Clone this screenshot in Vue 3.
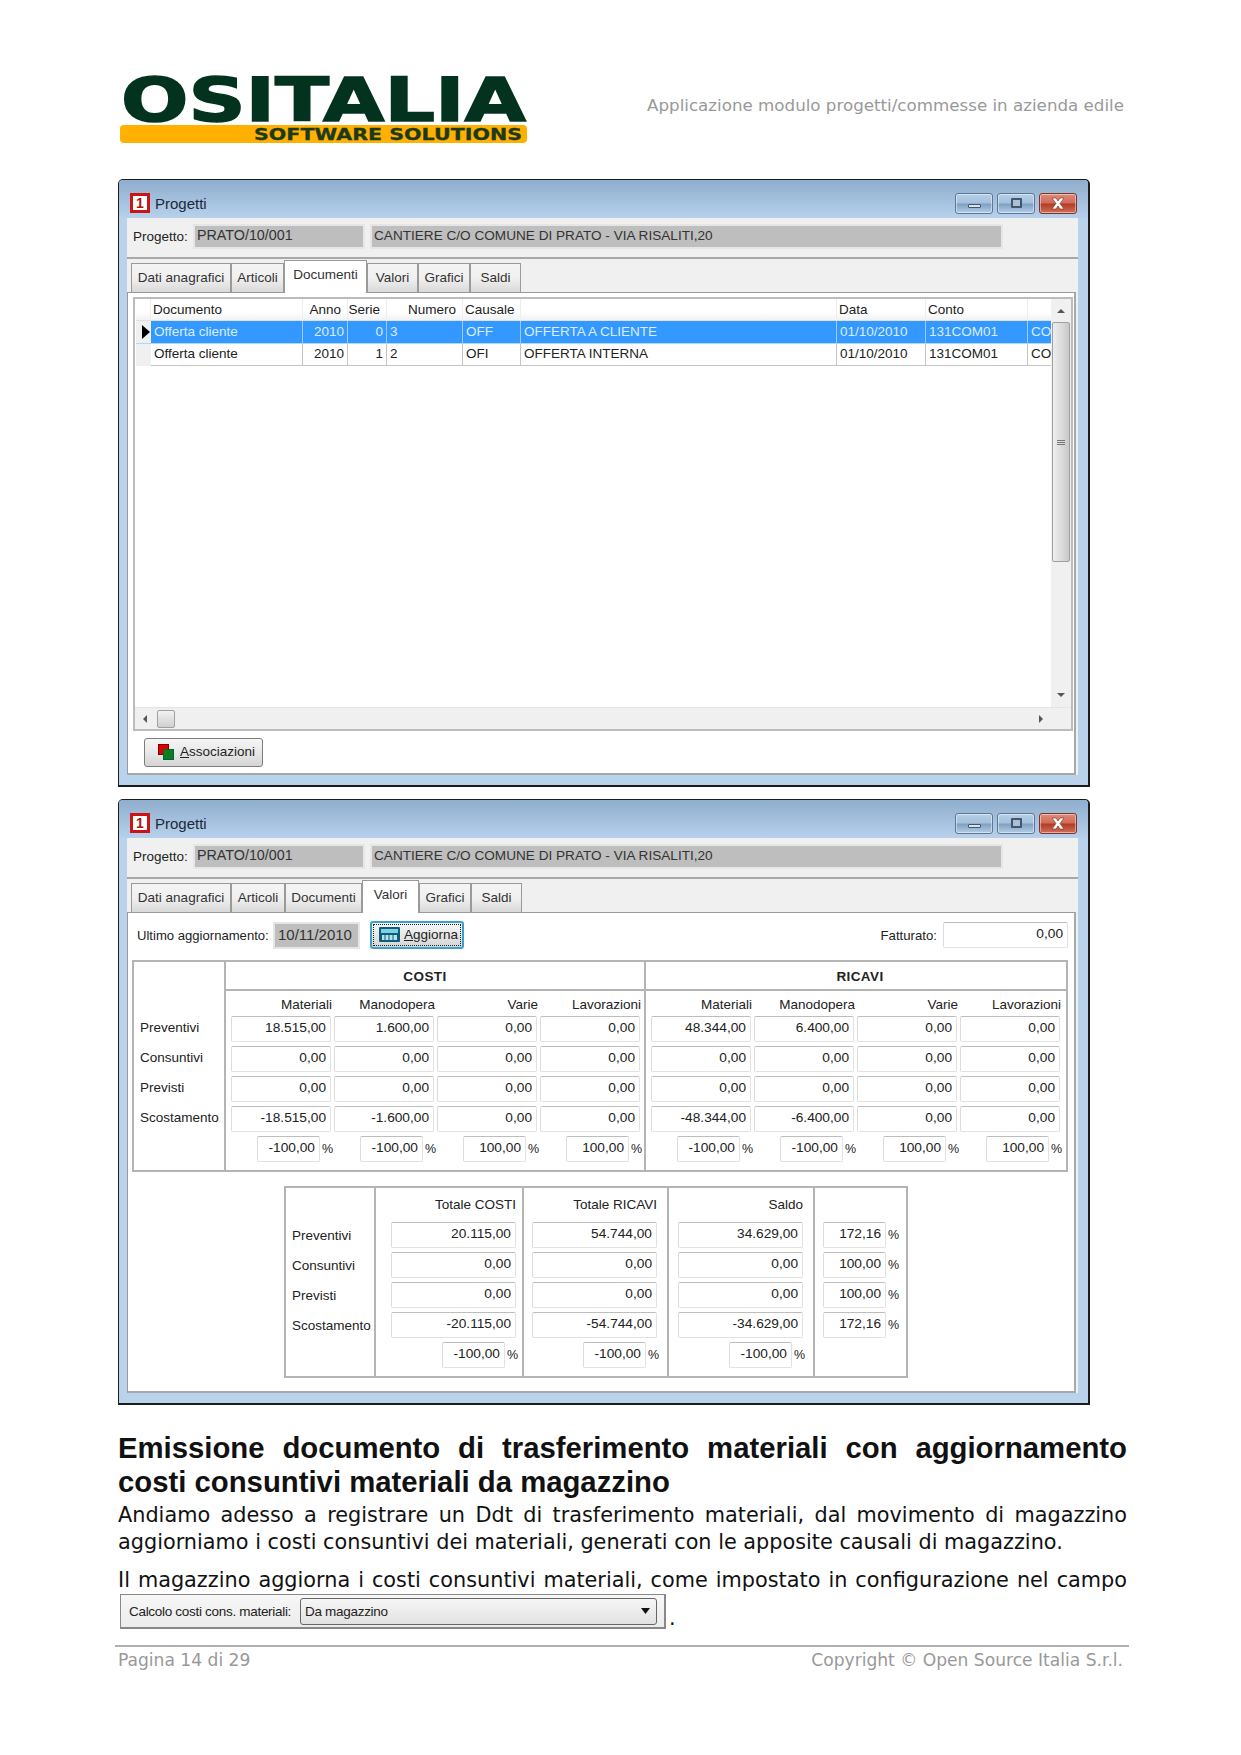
<script setup>
const tabs = ['Dati anagrafici', 'Articoli', 'Documenti', 'Valori', 'Grafici', 'Saldi']
const tabWidths1 = [100, 53, 83, 51, 52, 51]
const tabWidths2 = [100, 54, 77, 57, 52, 51]
const gridHead = ['', 'Documento', 'Anno', 'Serie', 'Numero', 'Causale', '', 'Data', 'Conto', '']
const headAlign = ['', '', 'r', 'r', 'r', '', '', '', '', '']
const cellAlign = ['', '', 'r', 'r', 'l', '', '', '', '', '']
const gridRows = [
  { sel: true, cells: ['', 'Offerta cliente', '2010', '0', '3', 'OFF', 'OFFERTA A CLIENTE', '01/10/2010', '131COM01', 'CO'] },
  { sel: false, cells: ['', 'Offerta cliente', '2010', '1', '2', 'OFI', 'OFFERTA INTERNA', '01/10/2010', '131COM01', 'CO'] }
]
const rowLabels = ['Preventivi', 'Consuntivi', 'Previsti', 'Scostamento']
const colHead = ['Materiali', 'Manodopera', 'Varie', 'Lavorazioni']
const groups = [
  { title: 'COSTI', rows: [['18.515,00', '1.600,00', '0,00', '0,00'], ['0,00', '0,00', '0,00', '0,00'], ['0,00', '0,00', '0,00', '0,00'], ['-18.515,00', '-1.600,00', '0,00', '0,00']], pct: ['-100,00', '-100,00', '100,00', '100,00'] },
  { title: 'RICAVI', rows: [['48.344,00', '6.400,00', '0,00', '0,00'], ['0,00', '0,00', '0,00', '0,00'], ['0,00', '0,00', '0,00', '0,00'], ['-48.344,00', '-6.400,00', '0,00', '0,00']], pct: ['-100,00', '-100,00', '100,00', '100,00'] }
]
const totals = [
  { head: 'Totale COSTI', cls: 'c1', vals: ['20.115,00', '0,00', '0,00', '-20.115,00'], pct: '-100,00' },
  { head: 'Totale RICAVI', cls: 'c2', vals: ['54.744,00', '0,00', '0,00', '-54.744,00'], pct: '-100,00' },
  { head: 'Saldo', cls: 'c3', vals: ['34.629,00', '0,00', '0,00', '-34.629,00'], pct: '-100,00' }
]
const lastPct = ['172,16', '100,00', '100,00', '172,16']
const windows = [
  { active: 2, widths: tabWidths1, cls: 'w1' },
  { active: 3, widths: tabWidths2, cls: 'w2' }
]
</script>

<template>
  <div class="page">
    <header class="top">
      <svg class="logo" width="408" height="72" viewBox="0 0 408 72">
        <text x="1" y="46" class="logo-main" textLength="405" lengthAdjust="spacingAndGlyphs">OSITALIA</text>
        <rect x="0" y="50" width="407" height="18" rx="4" fill="#ffb000" />
        <text x="134" y="64.500" class="logo-sub" textLength="268" lengthAdjust="spacingAndGlyphs">SOFTWARE SOLUTIONS</text>
      </svg>
      <div class="doc-title">Applicazione modulo progetti/commesse in azienda edile</div>
    </header>

    <section v-for="(w, wi) in windows" :key="wi" class="win" :class="w.cls">
      <div class="titlebar">
        <span class="app-icon"><span>1</span></span>
        <span class="win-title">Progetti</span>
        <div class="controls">
          <span class="ctl"><i class="min"></i></span>
          <span class="ctl"><i class="max"></i></span>
          <span class="ctl close">
            <svg width="18" height="13" viewBox="0 0 18 13"><path d="M3 1h4l2 3 2-3h4l-4 5.500 4 5.500h-4l-2-3-2 3H3l4-5.500z" fill="#fff" stroke="#7a2a20" stroke-width=".6" /></svg>
          </span>
        </div>
      </div>

      <div class="client">
        <div class="proj-row">
          <span class="lbl proj-lbl">Progetto:</span>
          <span class="ro f1">PRATO/10/001</span>
          <span class="ro f2">CANTIERE C/O COMUNE DI PRATO - VIA RISALITI,20</span>
        </div>
        <div class="tabs">
          <span v-for="(t, i) in tabs" :key="t" class="tab" :class="{ on: i === w.active }" :style="{ width: w.widths[i] + 'px' }">{{ t }}</span>
        </div>

        <div v-if="wi === 0" class="panel">
          <div class="gridbox">
            <div class="grid-main">
              <div class="grid-table">
                <div class="g-row head">
                  <span v-for="(h, i) in gridHead" :key="i" class="g-cell" :class="'a-' + headAlign[i]">{{ h }}</span>
                </div>
                <div v-for="(r, ri) in gridRows" :key="ri" class="g-row" :class="{ sel: r.sel }">
                  <span v-for="(c, i) in r.cells" :key="i" class="g-cell" :class="['a-' + cellAlign[i], { ind: i === 0 }]">
                    <svg v-if="i === 0 && r.sel" width="9" height="14" viewBox="0 0 9 14"><path d="M1 0l8 7-8 7z" fill="#000" /></svg>
                    <template v-else>{{ c }}</template>
                  </span>
                </div>
              </div>
              <div class="vscroll">
                <svg class="arrow" width="10" height="6" viewBox="0 0 10 6"><path d="M5 1l4 4H1z" fill="#555" /></svg>
                <div class="vthumb"><i></i><i></i><i></i></div>
                <svg class="arrow down" width="10" height="6" viewBox="0 0 10 6"><path d="M1 1h8L5 5z" fill="#555" /></svg>
              </div>
            </div>
            <div class="hscroll">
              <svg width="6" height="10" viewBox="0 0 6 10"><path d="M5 1v8L1 5z" fill="#555" /></svg>
              <div class="hthumb"></div>
              <svg class="hright" width="6" height="10" viewBox="0 0 6 10"><path d="M1 1v8l4-4z" fill="#555" /></svg>
            </div>
          </div>
          <button class="btn assoc">
            <svg width="16" height="16" viewBox="0 0 16 16"><rect x="0.500" y="0.500" width="10" height="10" fill="#e00000" stroke="#700" /><rect x="5.500" y="5.500" width="10" height="10" fill="#0d7d20" stroke="#063" /></svg>
            <span><u>A</u>ssociazioni</span>
          </button>
        </div>

        <div v-else class="panel values">
          <div class="val-top">
            <span class="lbl ultimo">Ultimo aggiornamento:</span>
            <span class="ro date">10/11/2010</span>
            <button class="btn aggiorna">
              <svg width="21" height="15" viewBox="0 0 21 15"><rect width="21" height="15" rx="1" fill="#0b5f7c" /><rect x="2" y="2" width="17" height="4" fill="#7fd0e0" /><rect x="3" y="8" width="15" height="5" fill="#b8e2ea" /><path d="M6 8v5M10 8v5M14 8v5" stroke="#0b5f7c" /></svg>
              <span><u>A</u>ggiorna</span>
            </button>
            <span class="lbl fatt">Fatturato:</span>
            <span class="field fatt-f">0,00</span>
          </div>

          <div class="matrix">
            <div class="m-labels">
              <span v-for="l in rowLabels" :key="l">{{ l }}</span>
            </div>
            <div v-for="g in groups" :key="g.title" class="m-group">
              <div class="m-title">{{ g.title }}</div>
              <div class="m-fields">
                <span v-for="h in colHead" :key="h" class="m-head">{{ h }}</span>
                <template v-for="(row, ri) in g.rows" :key="ri">
                  <span v-for="(v, vi) in row" :key="vi" class="field">{{ v }}</span>
                </template>
                <span v-for="(p, pi) in g.pct" :key="pi" class="pct-cell">
                  <span class="field pct">{{ p }}</span><span class="pc">%</span>
                </span>
              </div>
            </div>
          </div>

          <div class="totals">
            <div class="t-labels">
              <span v-for="l in rowLabels" :key="l">{{ l }}</span>
            </div>
            <div v-for="t in totals" :key="t.head" class="t-col" :class="t.cls">
              <span class="t-head">{{ t.head }}</span>
              <span v-for="(v, i) in t.vals" :key="i" class="field">{{ v }}</span>
              <span class="pct-cell"><span class="field pct">{{ t.pct }}</span><span class="pc">%</span></span>
            </div>
            <div class="t-col c4">
              <span class="t-head"></span>
              <span v-for="(p, i) in lastPct" :key="i" class="pct-cell"><span class="field pct">{{ p }}</span><span class="pc">%</span></span>
            </div>
          </div>
        </div>
      </div>
    </section>

    <h2 class="heading">
      <span class="just">Emissione documento di trasferimento materiali con aggiornamento</span>
      <span class="rest">costi consuntivi materiali da magazzino</span>
    </h2>
    <p class="para">
      <span class="just">Andiamo adesso a registrare un Ddt di trasferimento materiali, dal movimento di magazzino</span>
      <span class="rest">aggiorniamo i costi consuntivi dei materiali, generati con le apposite causali di magazzino.</span>
    </p>
    <p class="para second">
      <span class="just">Il magazzino aggiorna i costi consuntivi materiali, come impostato in configurazione nel campo</span>
      <span class="rest combo-line"><span class="combo-img"><span class="combo-lbl">Calcolo costi cons. materiali:</span><span class="combo">Da magazzino<svg width="9" height="6" viewBox="0 0 9 6"><path d="M0 0h9L4.500 6z" fill="#111" /></svg></span></span><span class="dot">.</span></span>
    </p>

    <footer class="foot">
      <span>Pagina 14 di 29</span>
      <span>Copyright © Open Source Italia S.r.l.</span>
    </footer>
  </div>
</template>

<style scoped>
.page {
  position: relative;
  width: 1241px;
  height: 1755px;
  box-sizing: border-box;
  padding: 75px 116px 0 118px;
  background: #fff;
  font-family: "DejaVu Sans", sans-serif;
  overflow: hidden;
}
.top { display: flex; align-items: flex-start; justify-content: space-between; height: 104px; padding-left: 2px; padding-right: 1px; box-sizing: border-box; }
.logo { display: block; overflow: visible; flex: none; }
.logo-main { font-family: "DejaVu Sans", sans-serif; font-weight: 700; font-size: 60px; fill: #03331f; stroke: #03331f; stroke-width: 1.500px; }
.logo-sub { font-family: "DejaVu Sans", sans-serif; font-weight: 700; font-size: 15px; fill: #1c3a1a; stroke: #1c3a1a; stroke-width: .3px; }
.doc-title { margin-top: 20px; font-size: 16.700px; color: #999; white-space: nowrap; }

.win {
  width: 972px;
  height: 608px;
  box-sizing: border-box;
  display: flex;
  flex-direction: column;
  margin-bottom: 12px;
  border: 1px solid #1c1c1c;
  border-width: 1px 2px 2px 1px;
  border-radius: 5px 5px 0 0;
  background: #b9d3ec;
  font-family: "Liberation Sans", sans-serif;
  font-size: 13.500px;
  color: #222;
}
.win.w2 { height: 606px; margin-bottom: 0; }
.titlebar {
  display: flex;
  align-items: center;
  height: 38px;
  flex: none;
  padding: 8px 11px 0 11px;
  box-sizing: border-box;
  background: linear-gradient(#8fadcd, #b7d1ec);
  border-radius: 4px 4px 0 0;
}
.app-icon {
  width: 20px; height: 20px; box-sizing: border-box;
  display: flex; align-items: center; justify-content: center;
  background: #fff; border: 3px solid #cc1414;
  font: 700 14px "Liberation Sans", sans-serif; color: #b01010;
}
.win-title { margin-left: 5px; font-size: 15px; color: #1c2a38; }
.controls { margin-left: auto; display: flex; gap: 4px; }
.ctl {
  width: 38px; height: 21px; box-sizing: border-box;
  display: flex; align-items: center; justify-content: center;
  border: 1px solid #5c7896; border-radius: 3px;
  background: linear-gradient(#b8cfe6 0, #a4c0dc 48%, #7f9fc2 52%, #b3cde6 100%);
  box-shadow: inset 0 0 0 1px rgba(255,255,255,.45);
}
.ctl.close { border-color: #7b3428; background: linear-gradient(#e08a78 0, #d06a58 48%, #b23a24 52%, #d0705c 100%); }
.ctl .min { width: 13px; height: 4px; margin-top: 5px; box-sizing: border-box; background: #d8e4f0; border: 1px solid #43566c; border-radius: 1px; }
.ctl .max { width: 11px; height: 10px; box-sizing: border-box; background: #a9c0d8; border: 2px solid #43566c; border-radius: 1px; }

.client { flex: 1; min-height: 0; display: flex; flex-direction: column; margin: 0 10px 10px 8px; background: #f0f0f0; }
.proj-row {
  display: flex; align-items: center; flex: none;
  height: 41px; box-sizing: border-box;
  padding: 0 0 3px 6px; border-bottom: 2px solid #a8a8a8;
}
.lbl { white-space: nowrap; }
.proj-lbl { width: 54px; flex: none; }
.ro {
  height: 25px; box-sizing: border-box; display: flex; align-items: center; padding: 0 0 2px 2px;
  background: #bebebe; border: 2px solid #e6e6e6; white-space: nowrap; font-size: 13.600px; color: #333;
}
.f1 { width: 172px; margin-left: 6px; font-size: 14.300px; flex: none; }
.f2 { width: 633px; margin-left: 5px; flex: none; }
.tabs { display: flex; flex: none; align-items: flex-end; height: 33px; padding-left: 4px; }
.tab {
  height: 29px; box-sizing: border-box; flex: none; padding-bottom: 1px;
  display: flex; align-items: center; justify-content: center;
  background: linear-gradient(#f4f4f4, #f0f0f0 50%, #d9d9d9);
  border: 1px solid #9a9a9a; border-bottom: 0;
  white-space: nowrap; color: #333;
}
.tab.on { height: 33px; background: #fff; padding-bottom: 6px; position: relative; margin-bottom: -1px; z-index: 1; }

.panel {
  flex: 1; min-height: 0; display: flex; flex-direction: column; margin-right: 2px;
  background: #fff; border: 1px solid #9a9a9a; border-width: 1px 2px 2px 1px; border-color: #9a9a9a #a8a8a8 #a8a8a8 #9a9a9a;
}
.gridbox { display: flex; flex-direction: column; height: 434px; margin: 4px 1px 0 5px; border: 2px solid #bcbcbc; box-sizing: border-box; flex: none; }
.grid-main { flex: 1; min-height: 0; display: flex; }
.grid-table { flex: 1; min-width: 0; padding-left: 1px; }
.g-row { display: grid; grid-template-columns: 15px 152px 45px 39px 76px 58px 316px 89px 102px 24px; height: 22.500px; }
.g-cell {
  display: flex; align-items: center; padding: 0 3px 1px; box-sizing: border-box;
  white-space: nowrap; overflow: hidden;
  border-right: 1px solid #c4c4c4; border-bottom: 1px solid #c4c4c4;
}
.g-row.head { height: 22px; background: linear-gradient(#fff 60%, #f0f0f0); }
.head .g-cell { padding: 0 3px 1px 2px; border-right-color: #eee; border-bottom-color: #e0e0e0; }
.head .g-cell.a-r { padding-right: 6px; }
.g-cell.ind { background: #f0f0f0; border-right: 0; padding: 0 0 0 5px; border-bottom-color: #f0f0f0; }
.g-cell.a-r { justify-content: flex-end; }
.sel .g-cell { background: #3399ff; color: #dcecff; border-right-color: #9ccbff; border-bottom-color: #b5d6f8; }
.sel .g-cell.ind { background: #f0f0f0; }
.vscroll { width: 20px; flex: none; display: flex; flex-direction: column; align-items: center; background: #f0f0f0; }
.arrow { margin-top: 9px; flex: none; }
.arrow.down { margin-top: auto; margin-bottom: 9px; }
.vthumb {
  width: 18px; height: 240px; margin-top: 8px; box-sizing: border-box;
  display: flex; flex-direction: column; align-items: center; justify-content: center; gap: 1px;
  background: linear-gradient(90deg, #eee, #dcdcdc 50%, #c8c8c8);
  border: 1px solid #a0a0a0; border-radius: 2px;
}
.vthumb i { width: 8px; height: 1px; background: #777; }
.hscroll { display: flex; align-items: center; height: 21px; flex: none; padding-left: 7px; background: #f0f0f0; border-top: 1px solid #e4e4e4; }
.hthumb { width: 18px; height: 18px; margin-left: 9px; box-sizing: border-box; background: linear-gradient(#f2f2f2, #d0d0d0); border: 1px solid #a0a0a0; border-radius: 2px; }
.hright { margin-left: 863px; }
.btn {
  display: flex; align-items: center; gap: 6px; box-sizing: border-box;
  font: inherit; color: inherit; padding: 0 0 2px;
  background: linear-gradient(#f5f5f5, #e8e8e8 50%, #d4d4d4);
  border: 1px solid #7d7d7d; border-radius: 3px;
}
.assoc { width: 119px; height: 29px; margin: 7px 0 0 16px; padding-left: 13px; }

.val-top { display: flex; align-items: center; height: 28px; margin-top: 8px; padding-left: 9px; flex: none; }
.ultimo { width: 132px; flex: none; font-size: 13.100px; }
.date { width: 87px; height: 27px; margin-left: 4px; padding-left: 3px; font-size: 15px; flex: none; }
.aggiorna {
  width: 94px; height: 28px; margin-left: 10px; padding-left: 7px; gap: 4px; flex: none;
  border: 2px solid #3da0cc; outline: 1px dotted #222; outline-offset: -4px;
}
.fatt { margin-left: auto; font-size: 13.200px; }
.fatt-f { width: 125px; height: 27px; margin-left: 6px; margin-right: 6px; flex: none; }

.field {
  display: flex; align-items: center; justify-content: flex-end;
  height: 26px; box-sizing: border-box; padding: 0 4px 3px 0;
  background: #fff; border: 1px solid #e2e2e2; border-top-color: #bdbdbd; border-left-color: #dcdcdc; border-radius: 2px;
  white-space: nowrap; font-size: 13.700px;
}
.pct-cell { display: flex; justify-content: flex-end; align-items: center; height: 26px; }
.pct { width: 63px; flex: none; }
.pc { width: 11px; margin: 0 -2px 0 2px; text-align: center; font-size: 12.500px; flex: none; }

.matrix {
  display: flex; flex: none;
  width: 936px; height: 212px; margin: 11px 0 0 4px; box-sizing: border-box;
  border: 2px solid #b4b4b4;
}
.m-labels { width: 92px; flex: none; display: flex; flex-direction: column; gap: 10px; padding: 56px 0 0 6px; box-sizing: border-box; border-right: 2px solid #b4b4b4; }
.m-labels span { height: 20px; line-height: 20px; white-space: nowrap; }
.m-group { width: 418px; flex: none; }
.m-group + .m-group { width: auto; flex: 1; border-left: 2px solid #b4b4b4; }
.m-title { height: 29px; display: flex; align-items: center; justify-content: center; padding: 2px 20px 0 0; font-weight: 700; border-bottom: 2px solid #b4b4b4; box-sizing: border-box; letter-spacing: .4px; }
.m-group + .m-group .m-title { padding: 2px 0 0 8px; }
.m-fields { display: grid; grid-template-columns: repeat(4, 100px); grid-template-rows: 21px repeat(5, 26px); column-gap: 3px; row-gap: 4px; padding-left: 5px; }
.m-head { display: flex; align-items: center; justify-content: flex-end; margin-right: -1px; padding-top: 6px; white-space: nowrap; }

.totals {
  display: grid; grid-template-columns: 88px 148px 145px 146px 93px; flex: none;
  width: 624px; height: 192px; box-sizing: border-box;
  margin: 14px 0 0 156px;
  border: 2px solid #b4b4b4;
}
.t-labels { display: flex; flex-direction: column; gap: 10px; padding: 38px 0 0 6px; box-sizing: border-box; }
.t-labels span { height: 20px; line-height: 20px; white-space: nowrap; }
.t-col { display: flex; flex-direction: column; gap: 4px; border-left: 2px solid #b4b4b4; box-sizing: border-box; }
.t-head { height: 26px; flex: none; display: flex; align-items: center; justify-content: flex-end; margin-top: 4px; padding-bottom: 2px; box-sizing: border-box; white-space: nowrap; }
.c1 { padding: 0 6px 0 15px; }
.c2 { padding: 0 10px 0 8px; }
.c3 { padding: 0 10px 0 9px; }
.c4 { padding: 0 7px 0 8px; }
.c4 .pct-cell { justify-content: flex-start; }

.just { display: block; text-align: justify; text-align-last: justify; white-space: nowrap; }
.rest { display: block; white-space: nowrap; }
.heading {
  margin: 26px -2px 0 0;
  font: 700 29.300px/33.500px "Liberation Sans", sans-serif;
  color: #111;
}
.para { margin: 4px -2px 0 0; font-size: 20.800px; line-height: 26.800px; color: #111; letter-spacing: 0; }
.para.second { margin-top: 11px; }
.combo-line { display: flex; align-items: flex-end; }
.combo-img {
  display: flex; align-items: center; margin: 1px 0 0 2px; flex: none;
  width: 546px; height: 35px; box-sizing: border-box; padding-left: 8px;
  background: linear-gradient(#f7f7f7, #ececec);
  border: 1px solid #888; border-width: 1px 2px 2px 1px;
  font: 13.500px "Liberation Sans", sans-serif; letter-spacing: -.3px; color: #222;
}
.combo-lbl { white-space: nowrap; width: 166px; flex: none; }
.combo {
  display: flex; align-items: center; justify-content: space-between;
  width: 357px; height: 27px; margin-left: 5px; padding: 0 6px 0 4px; box-sizing: border-box;
  background: linear-gradient(#f6f6f6, #e2e2e2);
  border: 1px solid #666; border-radius: 3px;
}
.dot { margin-left: 3px; line-height: 22px; }
.foot {
  position: absolute; left: 115px; top: 1645px; width: 1014px; box-sizing: border-box;
  display: flex; justify-content: space-between;
  padding: 3px 6px 0 3px;
  border-top: 2px solid #b0b0b0;
  font-size: 17.100px; color: #999;
}
</style>
